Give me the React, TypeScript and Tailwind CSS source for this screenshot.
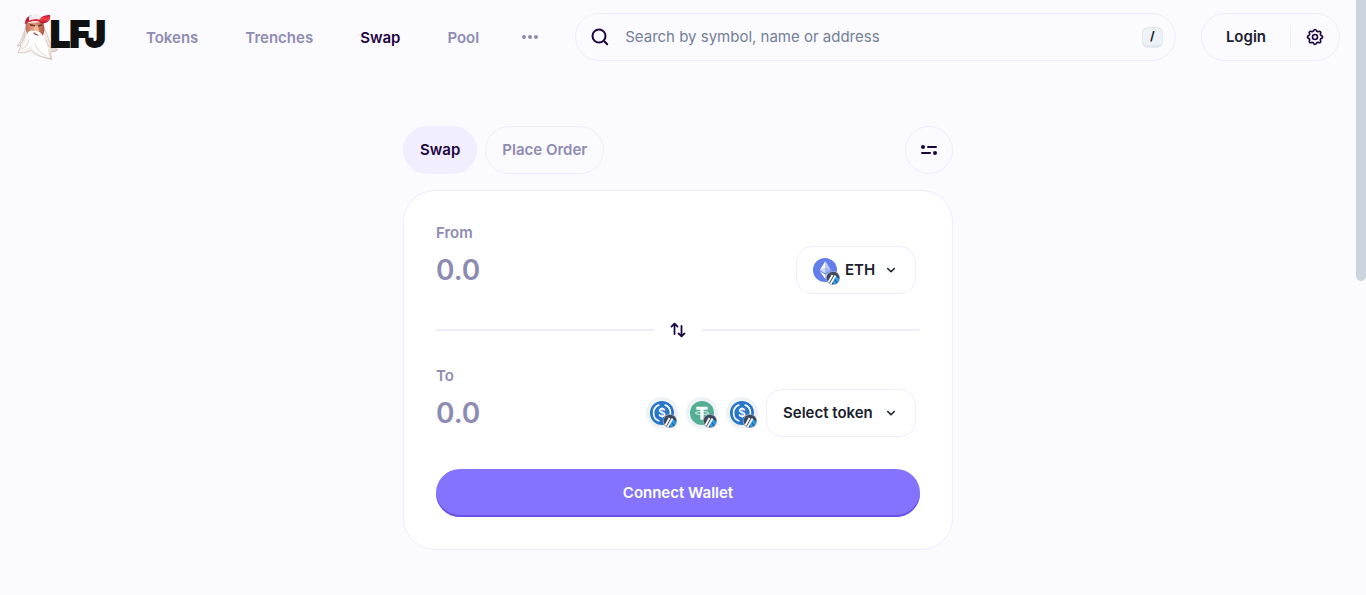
import { useState } from "react";
import { TbSettings } from "react-icons/tb";

const links = ["Tokens", "Trenches", "Swap", "Pool"];

export default function App() {
  const [tab, setTab] = useState("Swap");

  return (
    <div className="flex min-h-screen bg-[#fbfaff] font-['Inter','Liberation_Sans',sans-serif] text-[15px] leading-6 text-[#1a202c]">
      <div className="flex min-w-0 flex-1 flex-col">
        <Header />

        <main className="mx-auto mt-[65px] w-full max-w-[550px] pb-11">
          <div className="flex items-center gap-2">
            <TabButton
              label="Swap"
              isActive={tab === "Swap"}
              onClick={() => setTab("Swap")}
            />
            <TabButton
              label="Place Order"
              isActive={tab === "Place Order"}
              onClick={() => setTab("Place Order")}
            />
            <button
              type="button"
              aria-label="Swap settings"
              className="ml-auto flex size-12 items-center justify-center rounded-full border border-[#efecff] text-[#1c0440]"
            >
              <SlidersIcon />
            </button>
          </div>

          <div className="mt-4 rounded-[32px] border border-[#efecff] bg-white p-8">
            <label
              htmlFor="from"
              className="block leading-5 font-semibold text-[#8e8bb3]"
            >
              From
            </label>
            <div className="mt-[3px] flex h-12 items-center pr-1">
              <AmountInput id="from" />
              <button
                type="button"
                className="flex h-12 w-[120px] shrink-0 items-center rounded-2xl border border-[#efecff] px-4 font-semibold"
              >
                <TokenIcon icon={EthIcon} />
                <span className="ml-2">ETH</span>
                <ChevronIcon />
              </button>
            </div>

            <div className="mt-6 flex items-center">
              <div className="h-0.5 flex-1 bg-[#efecff]" />
              <button
                type="button"
                aria-label="Switch tokens"
                className="flex h-6 w-12 items-center justify-center text-[#1c0440]"
              >
                <SwitchIcon />
              </button>
              <div className="h-0.5 flex-1 bg-[#efecff]" />
            </div>

            <label
              htmlFor="to"
              className="mt-6 block leading-5 font-semibold text-[#8e8bb3]"
            >
              To
            </label>
            <div className="mt-[3px] flex h-12 items-center gap-2 pr-1">
              <AmountInput id="to" />
              <QuickToken label="USDC" icon={UsdcIcon} />
              <QuickToken label="USDT" icon={TetherIcon} />
              <QuickToken label="USDC.e" icon={UsdcIcon} />
              <button
                type="button"
                className="flex h-12 w-[150px] shrink-0 items-center rounded-2xl border border-[#efecff] px-4 font-semibold"
              >
                Select token
                <ChevronIcon />
              </button>
            </div>

            <button
              type="button"
              className="mt-8 h-12 w-full rounded-full bg-[#8473ff] font-semibold text-white shadow-[inset_0_-2px_0_#6a52e8]"
            >
              Connect Wallet
            </button>
          </div>
        </main>
      </div>

      <div className="w-[10px] shrink-0">
        <div className="h-[281px] rounded-b-full bg-[#cbd5e0]" />
      </div>
    </div>
  );
}

function Header() {
  return (
    <header className="flex items-center px-4 pt-[13px]">
      <a href="#" aria-label="LFJ" className="flex shrink-0 items-center">
        <WizardIcon />
        <span className="-mt-1 -ml-2 w-14 font-['Roboto',sans-serif] text-[36px] leading-9 font-black text-[#111] [-webkit-text-stroke:2px_#111]">
          LFJ
        </span>
      </a>

      <nav className="ml-10 flex shrink-0 items-center gap-[47px] pt-0.5 font-semibold text-[#8e8bb3]">
        {links.map((link) => (
          <a
            key={link}
            href="#"
            className={link === "Swap" ? "text-[#1c0440]" : ""}
          >
            {link}
          </a>
        ))}
        <button type="button" aria-label="More" className="-ml-1">
          <svg width="16" height="16" viewBox="0 0 16 16" fill="currentColor">
            <circle cx="2" cy="7" r="2" />
            <circle cx="8" cy="7" r="2" />
            <circle cx="14" cy="7" r="2" />
          </svg>
        </button>
      </nav>

      <div className="ml-[37px] flex h-12 min-w-0 flex-1 items-center rounded-full border border-[#efecff] pr-3 pl-[15px]">
        <svg
          width="18"
          height="18"
          viewBox="0 0 18 18"
          fill="none"
          stroke="#1c0440"
          strokeWidth="2"
          strokeLinecap="round"
          className="shrink-0"
        >
          <circle cx="8" cy="8" r="6.5" />
          <path d="m13 13 3.2 3.2" />
        </svg>
        <input
          type="text"
          aria-label="Search"
          placeholder="Search by symbol, name or address"
          className="ml-4 min-w-0 flex-1 bg-transparent outline-none placeholder:text-[#718096]"
        />
        <kbd className="flex size-[21px] items-center justify-center rounded-md border border-b-[3px] border-[#e2e8f0] bg-[#edf2f7] font-['Inter',sans-serif] text-xs font-bold">
          /
        </kbd>
      </div>

      <div className="ml-[25px] flex h-12 shrink-0 items-center rounded-full border border-[#efecff]">
        <button type="button" className="px-6 font-semibold">
          Login
        </button>
        <div className="h-6 w-px bg-[#efecff]" />
        <button
          type="button"
          aria-label="Settings"
          className="flex w-12 justify-center text-[#1c0440]"
        >
          <TbSettings size={20} />
        </button>
      </div>
    </header>
  );
}

type TabButtonProps = {
  label: string;
  isActive: boolean;
  onClick: () => void;
};

function TabButton(props: TabButtonProps) {
  return (
    <button
      type="button"
      onClick={props.onClick}
      className={`h-12 rounded-full border px-4 font-semibold ${
        props.isActive
          ? "border-[#f1efff] bg-[#f1efff] text-[#1c0440]"
          : "border-[#efecff] text-[#8e8bb3]"
      }`}
    >
      {props.label}
    </button>
  );
}

function AmountInput(props: { id: string }) {
  return (
    <input
      id={props.id}
      type="text"
      inputMode="decimal"
      placeholder="0.0"
      className="h-10 min-w-0 flex-1 bg-transparent text-[28px] font-semibold outline-none placeholder:text-[#8e8bb3]"
    />
  );
}

function TokenIcon(props: { icon: React.ElementType }) {
  return (
    <span className="relative block size-6">
      <props.icon />
      <span className="absolute -right-[3px] -bottom-[3px]">
        <ArbitrumIcon />
      </span>
    </span>
  );
}

function QuickToken(props: { label: string; icon: React.ElementType }) {
  return (
    <button
      type="button"
      aria-label={props.label}
      className="flex size-8 shrink-0 items-center justify-center rounded-full bg-[#edf2f7]"
    >
      <TokenIcon icon={props.icon} />
    </button>
  );
}

function ChevronIcon() {
  return (
    <svg
      width="10"
      height="10"
      viewBox="0 0 10 10"
      fill="none"
      stroke="currentColor"
      strokeWidth="1.6"
      strokeLinecap="round"
      strokeLinejoin="round"
      className="mr-[3px] ml-auto"
    >
      <path d="m1.7 3.5 3.3 3.2 3.3-3.2" />
    </svg>
  );
}

function SlidersIcon() {
  return (
    <svg width="16" height="12" viewBox="0 0 16 12" fill="currentColor">
      <circle cx="2" cy="3" r="2" />
      <rect x="6" y="2" width="10" height="2" rx="1" />
      <rect x="0" y="8" width="10" height="2" rx="1" />
      <circle cx="14" cy="9" r="2" />
    </svg>
  );
}

function SwitchIcon() {
  return (
    <svg
      width="16"
      height="16"
      viewBox="0 0 16 16"
      fill="none"
      stroke="currentColor"
      strokeWidth="1.8"
      strokeLinecap="round"
      strokeLinejoin="round"
    >
      <path d="M4.5 12V2M1.500 4.600l3-3 3 3M11.500 4v10M8.500 11.400l3 3 3-3" />
    </svg>
  );
}

function EthIcon() {
  return (
    <svg width="24" height="24" viewBox="0 0 32 32">
      <circle cx="16" cy="16" r="16" fill="#627eea" />
      <g fill="#fff">
        <path fillOpacity=".6" d="M16.5 4v8.87l7.5 3.35z" />
        <path d="M16.5 4 9 16.22l7.5-3.35z" />
        <path fillOpacity=".6" d="M16.5 21.97v6.03L24 17.62z" />
        <path d="M16.5 28v-6.03L9 17.62z" />
        <path fillOpacity=".4" d="m16.5 20.57 7.5-4.35-7.5-3.35z" />
        <path fillOpacity=".7" d="m9 16.22 7.5 4.35v-7.7z" />
      </g>
    </svg>
  );
}

function UsdcIcon() {
  return (
    <svg width="24" height="24" viewBox="0 0 32 32">
      <circle cx="16" cy="16" r="16" fill="#2775ca" />
      <path
        fill="none"
        stroke="#fff"
        strokeWidth="2.2"
        d="M12.5 5.200a11.400 11.400 0 0 0 0 21.600M19.500 5.200a11.400 11.400 0 0 1 0 21.600"
      />
      <text
        x="16"
        y="21.5"
        fill="#fff"
        fontSize="16"
        fontWeight="600"
        fontFamily="Inter, sans-serif"
        textAnchor="middle"
      >
        $
      </text>
    </svg>
  );
}

function TetherIcon() {
  return (
    <svg width="24" height="24" viewBox="0 0 32 32">
      <circle cx="16" cy="16" r="16" fill="#53ae94" />
      <path fill="#fff" d="M8.5 7.500h15v4h-5.400V25h-4.200V11.500H8.500z" />
      <ellipse
        cx="16"
        cy="16"
        rx="9"
        ry="2"
        fill="none"
        stroke="#fff"
        strokeWidth="1.1"
      />
    </svg>
  );
}

function ArbitrumIcon() {
  return (
    <svg width="14" height="14" viewBox="0 0 28 28">
      <clipPath id="arb">
        <circle cx="14" cy="14" r="12.6" />
      </clipPath>
      <circle cx="14" cy="14" r="14" fill="#9fb2c8" />
      <g clipPath="url(#arb)">
        <path fill="#3b475c" d="M0 0h28v28H0z" />
        <path fill="#28a0f0" d="m19 9 9 9v10H15l-1-6z" />
        <path stroke="#fff" strokeWidth="3.6" d="M13 8 3 26M19 9 8 28" />
        <path stroke="#3b475c" strokeWidth="2" d="m18 17 6 11" />
      </g>
    </svg>
  );
}

function WizardIcon() {
  return (
    <svg width="42" height="48" viewBox="0 0 42 48">
      <defs>
        <linearGradient id="beard" x1="0" y1="0" x2="1" y2="1">
          <stop offset="0" stopColor="#dccbc2" />
          <stop offset=".4" stopColor="#f7f2ef" />
          <stop offset=".75" stopColor="#efe7e2" />
          <stop offset="1" stopColor="#cdb9ac" />
        </linearGradient>
        <linearGradient id="brim" x1="0" y1="0" x2="0" y2="1">
          <stop offset="0" stopColor="#c4152c" />
          <stop offset=".5" stopColor="#f0444f" />
          <stop offset="1" stopColor="#a90c22" />
        </linearGradient>
        <linearGradient id="face" x1="0" y1="0" x2="1" y2="0">
          <stop offset="0" stopColor="#b96a52" />
          <stop offset=".4" stopColor="#e6a080" />
          <stop offset="1" stopColor="#a8563f" />
        </linearGradient>
      </defs>
      {/* hair and beard */}
      <path
        fill="url(#beard)"
        stroke="#cbb9ae"
        strokeWidth=".7"
        strokeLinejoin="round"
        d="M11 11C8 17 7 27 1 33l4-.5c-1 3-2 5-3 7 5 1 9 0 13-2 4 5 12 7 21 9-1-3-2-5-1-8 3 1 5 0 7-2-5-2-8-5-10-12l-4-10z"
      />
      {/* face */}
      <path
        fill="url(#face)"
        d="M10 10c-1 5 0 10 4 14l7-3 5 3c3-4 3-10 1-15z"
      />
      <path fill="#6e3429" d="m14 11 5 1v1.500l-5-.8zM22 12.200l4-1v1.500l-4 1z" />
      <path fill="#f2bb9c" d="m19 12.500 3 .5 1 5-4 1-1.500-2z" />
      {/* moustache and front of the beard */}
      <path
        fill="#fff"
        d="M18 18c-5-2-7 2-8 7-1 5-2 8-5 12 5 0 8-2 10-5 1 6 9 11 19 13-3-7-1-13-6-20-2-4-5-8-10-7z"
      />
      <path
        fill="none"
        stroke="#d3c2b8"
        strokeWidth=".8"
        d="M13 26c-1 5-3 8-7 10M19 30c1 6 6 10 11 13M30 27c1 5 4 8 8 10M9 20c0 5-3 9-5 12"
      />
      <path
        fill="none"
        stroke="#a5574c"
        strokeWidth="1.2"
        strokeLinecap="round"
        d="M18 20c1 1 2 2 4 2"
      />
      {/* cap */}
      <path fill="#b51c30" d="M9 11c0-6 4-9 9-9l7 7c-6-2-11-1-16 2z" />
      <path fill="#f6efef" d="M13 3.500c3-2 7-3 10-2l2 6c-4-2-8-1-12 1z" />
      <path fill="#d92b40" d="M9 11c5-4 11-4 17-2l-.5-2c-5-1.500-11-1-16 2z" />
      <path
        fill="url(#brim)"
        d="M23 8c1-4 5-6 11-6 1 4-1 7-5 8-3 1-5 0-6-2z"
      />
    </svg>
  );
}
